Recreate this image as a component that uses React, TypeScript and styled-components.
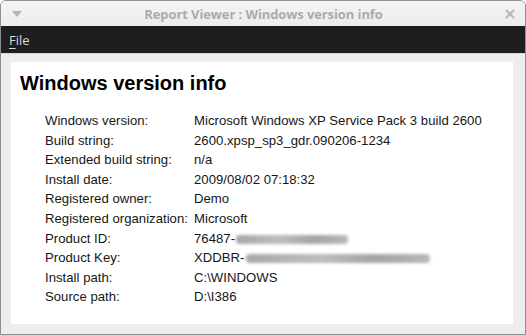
import { Fragment } from "react";
import styled, { createGlobalStyle } from "styled-components";

const GlobalStyle = createGlobalStyle`
  html, body {
    margin: 0;
    padding: 0;
    background: #ffffff;
  }
`;

const Window = styled.div`
  width: 526px;
  height: 335px;
  box-sizing: border-box;
  border: 1px solid #8e8e8e;
  border-radius: 6px 6px 0 0;
  overflow: hidden;
  display: flex;
  flex-direction: column;
  background: #ededed;
`;

const TitleBar = styled.div`
  height: 25px;
  flex: none;
  display: flex;
  align-items: center;
  justify-content: space-between;
  padding: 0 10px 0 11px;
  background: linear-gradient(#f4f4f4, #ececec);
  font-family: "Open Sans", "DejaVu Sans", sans-serif;
  font-weight: 700;
  font-size: 13px;
  color: #ababab;
`;

const Title = styled.div`
  flex: 1;
  text-align: center;
  letter-spacing: -0.1px;
`;

const MenuBar = styled.div`
  height: 27px;
  flex: none;
  display: flex;
  align-items: center;
  padding: 0 8px;
  background: #1e1e1e;
  border-bottom: 1px solid #d6d6d6;
  font-family: "Open Sans", "DejaVu Sans", sans-serif;
  font-size: 13px;
  color: #d8d8d8;
`;

const MenuItem = styled.span`
  u {
    text-decoration-thickness: 1px;
    text-underline-offset: 3px;
  }
`;

const Body = styled.div`
  flex: 1;
  padding: 8px 12px 10px 10px;
  display: flex;
`;

const Panel = styled.div`
  flex: 1;
  background: #ffffff;
  padding: 9px 9px;
  font-family: "Liberation Sans", Arial, sans-serif;
  color: #161616;
`;

const Heading = styled.h1`
  margin: 0 0 16px 0;
  font-size: 20px;
  font-weight: 700;
  line-height: 24px;
  color: #000;
`;

const InfoTable = styled.div`
  display: grid;
  grid-template-columns: 149px 1fr;
  padding-left: 25px;
  font-size: 13.15px;
  line-height: 19.6px;
  letter-spacing: 0.02px;
`;

const Blur = styled.span<{ $w: number }>`
  display: inline-block;
  width: ${(p) => p.$w}px;
  height: 9px;
  vertical-align: middle;
  margin-left: 1px;
  border-radius: 4px;
  background: linear-gradient(90deg, #a8a8a8, #bdbdbd 40%, #a4a4a4 70%, #b8b8b8);
  filter: blur(1.6px);
`;

const rows: [string, React.ReactNode][] = [
  ["Windows version:", "Microsoft Windows XP Service Pack 3 build 2600"],
  ["Build string:", "2600.xpsp_sp3_gdr.090206-1234"],
  ["Extended build string:", "n/a"],
  ["Install date:", "2009/08/02 07:18:32"],
  ["Registered owner:", "Demo"],
  ["Registered organization:", "Microsoft"],
  ["Product ID:", <>76487-<Blur $w={112} /></>],
  ["Product Key:", <>XDDBR-<Blur $w={184} /></>],
  ["Install path:", "C:\\WINDOWS"],
  ["Source path:", "D:\\I386"],
];

function App() {
  return (
    <>
      <GlobalStyle />
      <Window>
        <TitleBar>
          <svg width="10" height="6" viewBox="0 0 10 6">
            <path d="M0 0 L10 0 L5 6 Z" fill="#b4b4b4" />
          </svg>
          <Title>Report Viewer : Windows version info</Title>
          <svg width="10" height="10" viewBox="0 0 10 10">
            <path d="M1 1 L9 9 M9 1 L1 9" stroke="#b8b8b8" strokeWidth="2.2" />
          </svg>
        </TitleBar>
        <MenuBar>
          <MenuItem>
            <u>F</u>ile
          </MenuItem>
        </MenuBar>
        <Body>
          <Panel>
            <Heading>Windows version info</Heading>
            <InfoTable>
              {rows.map(([label, value]) => (
                <Fragment key={label}>
                  <span>{label}</span>
                  <span>{value}</span>
                </Fragment>
              ))}
            </InfoTable>
          </Panel>
        </Body>
      </Window>
    </>
  );
}

export default App;
